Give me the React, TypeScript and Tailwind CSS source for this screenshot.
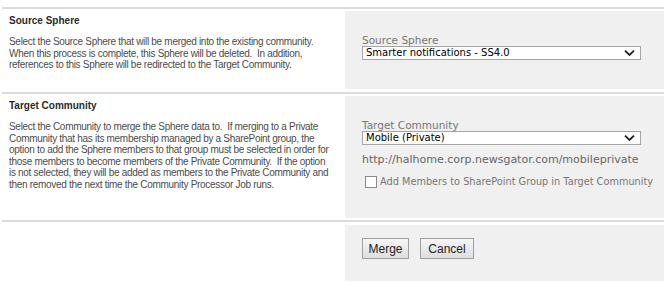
import React from 'react';

function Chevron() {
  return (
    <svg width="11" height="7" viewBox="0 0 11 7" className="absolute right-[5px] top-1/2 -translate-y-1/2">
      <path d="M1 1.2 L5.5 5.5 L10 1.2" fill="none" stroke="#222" strokeWidth="1.8" />
    </svg>
  );
}

function FakeSelect({ value }: { value: string }) {
  return (
    <div className="relative h-[14px] w-[279px] border border-[#a5a5a5] bg-white">
      <span className="absolute left-[3px] top-[-1px] text-[10px] leading-[14px] text-black">{value}</span>
      <Chevron />
    </div>
  );
}

function Separator() {
  return <div className="ml-[2px] h-[2px] w-[662px] bg-[#dcdcdc]" />;
}

function Lines({ lines }: { lines: string[] }) {
  return (
    <div className="mt-[9px] whitespace-pre text-[10px] leading-[11.5px] tracking-[-0.3px] text-[#4c4c4c]">
      {lines.map((l, i) => (
        <div key={i}>{l}</div>
      ))}
    </div>
  );
}

export default function App() {
  return (
    <div className="h-[283px] w-[668px] bg-white pt-[7px] font-['Liberation_Sans',Arial,sans-serif]">
      <Separator />

      {/* Source Sphere */}
      <div className="mt-[2px] flex h-[78px]">
        <div className="w-[345px] pl-[9px] pt-[4px]">
          <div className="text-[10px] font-bold leading-[12px] text-[#2a2a2a]">Source Sphere</div>
          <Lines
            lines={[
              'Select the Source Sphere that will be merged into the existing community.',
              'When this process is complete, this Sphere will be deleted.  In addition,',
              'references to this Sphere will be redirected to the Target Community.',
            ]}
          />
        </div>
        <div className="w-[319px] bg-[#f0f0f0] pl-[17px] pt-[23px] font-['DejaVu_Sans',Verdana,sans-serif]">
          <div className="text-[10.5px] leading-[12px] text-[#777]">Source Sphere</div>
          <FakeSelect value="Smarter notifications - SS4.0" />
        </div>
      </div>

      <div className="mt-[3px]" />
      <Separator />

      {/* Target Community */}
      <div className="mt-[2px] flex h-[122px]">
        <div className="w-[345px] pl-[9px] pt-[4px]">
          <div className="text-[10px] font-bold leading-[12px] text-[#2a2a2a]">Target Community</div>
          <Lines
            lines={[
              'Select the Community to merge the Sphere data to.  If merging to a Private',
              'Community that has its membership managed by a SharePoint group, the',
              'option to add the Sphere members to that group must be selected in order for',
              'those members to become members of the Private Community.  If the option',
              'is not selected, they will be added as members to the Private Community and',
              'then removed the next time the Community Processor Job runs.',
            ]}
          />
        </div>
        <div className="w-[319px] bg-[#f0f0f0] pl-[17px] pt-[23px] font-['DejaVu_Sans',Verdana,sans-serif]">
          <div className="text-[10.5px] leading-[12px] text-[#777]">Target Community</div>
          <FakeSelect value="Mobile (Private)" />
          <div className="mt-[9px] text-[11px] leading-[12px] text-[#666]">http://halhome.corp.newsgator.com/mobileprivate</div>
          <label className="mt-[10px] flex items-center gap-[3px] whitespace-nowrap pl-[3px] text-[9.75px] leading-[12px] text-[#777]">
            <span className="inline-block h-[12px] w-[12px] border border-[#8a8a8a] bg-white" />
            Add Members to SharePoint Group in Target Community
          </label>
        </div>
      </div>

      <div className="mt-[2px]" />
      <Separator />

      {/* Buttons */}
      <div className="mt-[3px] flex h-[56px]">
        <div className="w-[345px]" />
        <div className="flex w-[319px] gap-[11px] bg-[#f0f0f0] pl-[17px] pt-[13px]">
          <button className="h-[21px] w-[47px] border border-[#a0a0a0] bg-gradient-to-b from-[#f6f6f6] to-[#dedede] font-['Liberation_Sans',Arial,sans-serif] text-[12px] text-[#222]">
            Merge
          </button>
          <button className="h-[21px] w-[54px] border border-[#a0a0a0] bg-gradient-to-b from-[#f6f6f6] to-[#dedede] font-['Liberation_Sans',Arial,sans-serif] text-[12px] text-[#222]">
            Cancel
          </button>
        </div>
      </div>
    </div>
  );
}
